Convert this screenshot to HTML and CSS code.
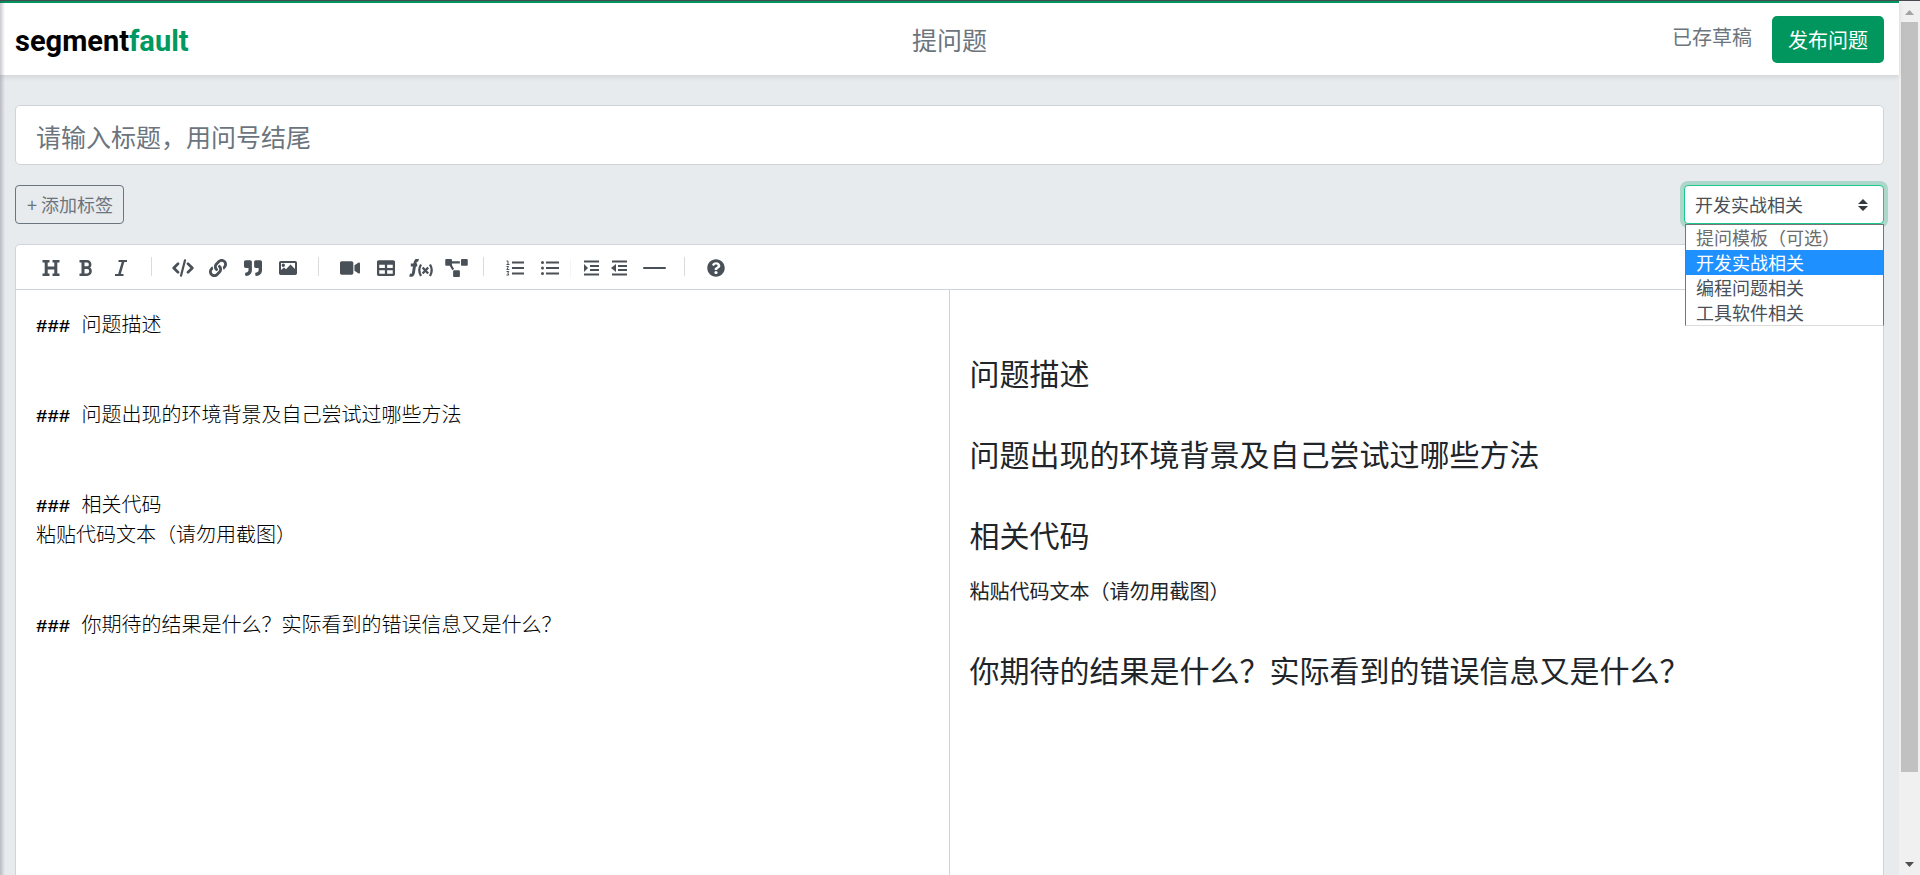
FILE: index.html
```html
<!DOCTYPE html>
<html lang="zh-CN">
<head>
<meta charset="utf-8">
<title>提问题 - SegmentFault</title>
<link rel="stylesheet" href="styles.css">
</head>
<body>
<div class="window">
  <div class="page">
    <header class="header">
      <a class="logo" href="#">segment<span class="logo-accent">fault</span></a>
      <h1 class="header-title">提问题</h1>
      <div class="header-actions">
        <span class="draft-state">已存草稿</span>
        <button class="publish" type="button">发布问题</button>
      </div>
    </header>

    <main class="main">
      <input class="title-input" type="text" aria-label="标题" placeholder="请输入标题，用问号结尾">

      <div class="meta-row">
        <button class="add-tag" type="button">+ 添加标签</button>
        <div class="template">
          <select class="template-select" aria-label="提问模板">
            <option>提问模板（可选）</option>
            <option selected>开发实战相关</option>
            <option>编程问题相关</option>
            <option>工具软件相关</option>
          </select>
          <svg class="template-arrows" viewBox="0 0 10 12" aria-hidden="true"><path d="M5 0l5 5H0zM0 7h10l-5 5z"/></svg>
          <ul class="template-menu">
            <li class="template-item muted">提问模板（可选）</li>
            <li class="template-item active">开发实战相关</li>
            <li class="template-item">编程问题相关</li>
            <li class="template-item">工具软件相关</li>
          </ul>
        </div>
      </div>

      <section class="editor">
        <div class="toolbar" role="toolbar" aria-label="编辑工具">
          <button class="tool" type="button" aria-label="标题"><svg class="icon line" width="18" height="16" viewBox="0 0 18 16"><path d="M.5 1.300h7M10.500 1.300h7M.5 14.700h7M10.500 14.700h7" stroke-width="2.500"/><path d="M4.200 1v14M13.800 1v14M4 8h10" stroke-width="3"/></svg></button>
          <button class="tool" type="button" aria-label="粗体"><svg class="icon line" width="14" height="16" viewBox="0 0 14 16"><path d="M.5 1.300H8a3.100 3.100 0 0 1 0 6.300H4M8 7.600a3.500 3.500 0 0 1 0 7.100H.5" stroke-width="2.600"/><path d="M4 1v14" stroke-width="3"/></svg></button>
          <button class="tool" type="button" aria-label="斜体"><svg class="icon line" width="12" height="16" viewBox="0 0 12 16"><path d="M3.500 1.100H12M0 14.900h8.500" stroke-width="2"/><path d="M8.300 1L4.200 15" stroke-width="2.600"/></svg></button>
          <span class="divider"></span>
          <button class="tool" type="button" aria-label="代码"><svg class="icon line round" width="22" height="18" viewBox="0 0 22 18"><path d="M6 4.800L1.700 9 6 13.200M16 4.800L20.300 9 16 13.200" stroke-width="2.700"/><path d="M13 1.300L9 16.700" stroke-width="2.200"/></svg></button>
          <button class="tool" type="button" aria-label="链接"><svg class="icon" width="18" height="18" viewBox="0 0 512 512"><path d="M326.612 185.391c59.747 59.809 58.927 155.698.36 214.59-.11.12-.24.25-.36.37l-67.2 67.2c-59.27 59.27-155.699 59.262-214.96 0-59.27-59.26-59.27-155.7 0-214.96l37.106-37.106c9.84-9.84 26.786-3.3 27.294 10.606.648 17.722 3.826 35.527 9.69 52.721 1.986 5.822.567 12.262-3.783 16.612l-13.087 13.087c-28.026 28.026-28.905 73.66-1.155 101.96 28.024 28.579 74.086 28.749 102.325.51l67.2-67.19c28.191-28.191 28.073-73.757 0-101.83-3.701-3.694-7.429-6.564-10.341-8.569a16.037 16.037 0 0 1-6.947-12.606c-.396-10.567 3.348-21.456 11.698-29.806l21.054-21.055c5.521-5.521 14.182-6.199 20.584-1.731a152.482 152.482 0 0 1 20.522 17.197zM467.547 44.449c-59.261-59.262-155.69-59.27-214.96 0l-67.2 67.2c-.12.12-.25.25-.36.37-58.566 58.892-59.387 154.781.36 214.59a152.454 152.454 0 0 0 20.521 17.196c6.402 4.468 15.064 3.789 20.584-1.731l21.054-21.055c8.35-8.35 12.094-19.239 11.698-29.806a16.037 16.037 0 0 0-6.947-12.606c-2.912-2.005-6.64-4.875-10.341-8.569-28.073-28.073-28.191-73.639 0-101.83l67.2-67.19c28.239-28.239 74.3-28.069 102.325.51 27.75 28.3 26.872 73.934-1.155 101.96l-13.087 13.087c-4.35 4.35-5.769 10.79-3.783 16.612 5.864 17.194 9.042 34.999 9.69 52.721.509 13.906 17.454 20.446 27.294 10.606l37.106-37.106c59.271-59.259 59.271-155.699.001-214.959z"/></svg></button>
          <button class="tool" type="button" aria-label="引用"><svg class="icon" width="18" height="18" viewBox="0 0 512 512"><path d="M464 32H336c-26.5 0-48 21.5-48 48v128c0 26.5 21.5 48 48 48h80v64c0 35.300-28.700 64-64 64h-8c-13.300 0-24 10.700-24 24v48c0 13.300 10.700 24 24 24h8c88.400 0 160-71.600 160-160V80c0-26.500-21.500-48-48-48zm-288 0H48C21.500 32 0 53.500 0 80v128c0 26.500 21.500 48 48 48h80v64c0 35.300-28.700 64-64 64h-8c-13.300 0-24 10.700-24 24v48c0 13.300 10.700 24 24 24h8c88.400 0 160-71.600 160-160V80c0-26.500-21.500-48-48-48z"/></svg></button>
          <button class="tool" type="button" aria-label="图片"><svg class="icon" width="18" height="14" viewBox="0 0 18 14"><path fill-rule="evenodd" d="M1.700 0h14.600A1.700 1.700 0 0 1 18 1.700v10.600a1.700 1.700 0 0 1-1.700 1.700H1.700A1.700 1.700 0 0 1 0 12.300V1.700A1.700 1.700 0 0 1 1.700 0zM2 2v7l3-2.600 2 1.800 4.500-4.700L16 8V2zM2.600 4.200a1.700 1.700 0 1 0 3.400 0 1.700 1.700 0 1 0-3.400 0z"/></svg></button>
          <span class="divider"></span>
          <button class="tool" type="button" aria-label="视频"><svg class="icon" width="20" height="18" viewBox="0 0 576 512"><path d="M336.200 64H47.800C21.400 64 0 85.400 0 111.800v288.400C0 426.600 21.400 448 47.800 448h288.400c26.400 0 47.800-21.400 47.800-47.800V111.800c0-26.400-21.400-47.800-47.800-47.800zm189.400 37.700L416 177.300v157.400l109.600 75.500c21.200 14.600 50.400-.3 50.400-25.800V127.500c0-25.400-29.100-40.400-50.400-25.800z"/></svg></button>
          <button class="tool spaced" type="button" aria-label="表格"><svg class="icon" width="18" height="18" viewBox="0 0 512 512"><path d="M464 32H48C21.490 32 0 53.490 0 80v352c0 26.510 21.490 48 48 48h416c26.510 0 48-21.490 48-48V80c0-26.510-21.490-48-48-48zM224 416H64v-96h160v96zm0-160H64v-96h160v96zm224 160H288v-96h160v96zm0-160H288v-96h160v96z"/></svg></button>
          <button class="tool" type="button" aria-label="公式"><svg class="icon line" width="24" height="18" viewBox="0 0 24 18"><path d="M9.500 1.500C7 .6 6.300 2 5.900 4.500L4.500 13.500C4.100 16 3 16.700.6 16M1.800 6h6.400" stroke-width="2.900"/><path d="M12 5.500q-3.400 5.700 0 11.500M21 5.500q3.400 5.700 0 11.500M13.600 8.500l5.600 6M19.200 8.500l-5.600 6" stroke-width="2.300"/></svg></button>
          <button class="tool spaced" type="button" aria-label="流程图"><svg class="icon" width="23" height="18" viewBox="0 0 640 512"><path d="M384 320H256c-17.670 0-32 14.330-32 32v128c0 17.670 14.330 32 32 32h128c17.670 0 32-14.330 32-32V352c0-17.670-14.330-32-32-32zM192 32c0-17.670-14.330-32-32-32H32C14.330 0 0 14.330 0 32v128c0 17.670 14.330 32 32 32h95.720l73.160 128.040C211.980 300.980 232.400 288 256 288h.28L192 175.510V128h224V64H192V32zM608 0H480c-17.670 0-32 14.330-32 32v128c0 17.670 14.330 32 32 32h128c17.670 0 32-14.330 32-32V32c0-17.670-14.330-32-32-32z"/></svg></button>
          <span class="divider after-wide"></span>
          <button class="tool" type="button" aria-label="有序列表"><svg class="icon line" width="18" height="16" viewBox="0 0 18 16"><path d="M6 2.500h12M6 8h12M6 13.500h12" stroke-width="2"/><path d="M.5 1H2v3.500M.5 4.500h3M.5 6.500h2L.8 9.500h2.500M.5 11.500h2.300l-1 1.500 1 2H.5" stroke-width="1"/></svg></button>
          <button class="tool" type="button" aria-label="无序列表"><svg class="icon line" width="18" height="16" viewBox="0 0 18 16"><path d="M5 2.500h13M5 8h13M5 13.500h13" stroke-width="2"/><path class="dot" d="M0 2.500a1.500 1.500 0 1 0 3 0 1.500 1.500 0 1 0-3 0M0 8a1.500 1.500 0 1 0 3 0 1.500 1.500 0 1 0-3 0M0 13.500a1.500 1.500 0 1 0 3 0 1.500 1.500 0 1 0-3 0"/></svg></button>
          <span class="divider faint"></span>
          <button class="tool narrow" type="button" aria-label="增加缩进"><svg class="icon line" width="16" height="16" viewBox="0 0 16 16"><path d="M1 1.500h15M7 6h9M7 10h9M1 14.500h15" stroke-width="2"/><path class="dot" d="M1 4v8l4-4z"/></svg></button>
          <button class="tool narrow" type="button" aria-label="减少缩进"><svg class="icon line" width="16" height="16" viewBox="0 0 16 16"><path d="M1 1.500h15M7 6h9M7 10h9M1 14.500h15" stroke-width="2"/><path class="dot" d="M5 4v8L0 8z"/></svg></button>
          <button class="tool wide" type="button" aria-label="分割线"><svg class="icon line round" width="23" height="4" viewBox="0 0 23 4"><path d="M1 2h21" stroke-width="2"/></svg></button>
          <span class="divider after-wide"></span>
          <button class="tool" type="button" aria-label="帮助"><svg class="icon" width="18" height="18" viewBox="0 0 512 512"><path d="M504 256c0 136.997-111.043 248-248 248S8 392.997 8 256C8 119.083 119.043 8 256 8s248 111.083 248 248zM262.655 90c-54.497 0-89.255 22.957-116.549 63.758-3.536 5.286-2.353 12.415 2.715 16.258l34.699 26.310c5.205 3.947 12.621 3.008 16.665-2.122 17.864-22.658 30.113-35.797 57.303-35.797 20.429 0 45.698 13.148 45.698 32.958 0 14.976-12.363 22.667-32.534 33.976C247.128 238.528 216 254.941 216 296v4c0 6.627 5.373 12 12 12h56c6.627 0 12-5.373 12-12v-1.333c0-28.462 83.186-29.647 83.186-106.667 0-58.002-60.165-102-116.531-102zM256 338c-25.365 0-46 20.635-46 46 0 25.364 20.635 46 46 46s46-20.636 46-46c0-25.365-20.635-46-46-46z"/></svg></button>
        </div>

        <div class="panes">
          <div class="source" role="textbox" aria-multiline="true" aria-label="问题内容" contenteditable="true" spellcheck="false"><div class="source-line"><span class="hash">### </span>问题描述</div><div class="source-line"></div><div class="source-line"></div><div class="source-line"><span class="hash">### </span>问题出现的环境背景及自己尝试过哪些方法</div><div class="source-line"></div><div class="source-line"></div><div class="source-line"><span class="hash">### </span>相关代码</div><div class="source-line">粘贴代码文本（请勿用截图）</div><div class="source-line"></div><div class="source-line"></div><div class="source-line"><span class="hash">### </span>你期待的结果是什么？实际看到的错误信息又是什么？</div></div>
          <article class="preview">
            <h3 class="preview-heading">问题描述</h3>
            <h3 class="preview-heading">问题出现的环境背景及自己尝试过哪些方法</h3>
            <h3 class="preview-heading">相关代码</h3>
            <p class="preview-text">粘贴代码文本（请勿用截图）</p>
            <h3 class="preview-heading">你期待的结果是什么？实际看到的错误信息又是什么？</h3>
          </article>
        </div>
      </section>
    </main>
  </div>

  <div class="scrollbar" aria-hidden="true">
    <svg class="scroll-arrow up" viewBox="0 0 9 5"><path d="M4.500 0L9 5H0z"/></svg>
    <div class="scroll-track"><div class="scroll-thumb"></div></div>
    <svg class="scroll-arrow" viewBox="0 0 9 5"><path d="M0 0h9L4.500 5z"/></svg>
  </div>
</div>
</body>
</html>
```

FILE: styles.css
```css
* {
  box-sizing: border-box;
}

body {
  margin: 0;
  font-family: "Noto Sans CJK SC", "Noto Sans", sans-serif;
  font-size: 20px;
  line-height: 30px;
  color: #212529;
}

button,
input,
select {
  font-family: inherit;
}

.window {
  display: flex;
  height: 100vh;
  overflow: hidden;
  border-top: 1px solid #494950;
}

.page {
  position: relative;
  flex: 1;
  min-width: 0;
  display: flex;
  flex-direction: column;
  background: #e7ebee;
}

/* soft shade along the left window edge */
.page::after {
  content: "";
  position: absolute;
  top: 0;
  bottom: 0;
  left: 0;
  width: 5px;
  background: linear-gradient(to right, rgba(70, 60, 80, 0.28), rgba(70, 60, 80, 0));
  pointer-events: none;
}

.header {
  display: grid;
  grid-template-columns: 1fr auto 1fr;
  align-items: center;
  height: 74px;
  padding: 0 15px;
  border-top: 2px solid #00965e;
  background: #fff;
  box-shadow: 0 2px 5px rgba(0, 0, 0, 0.1);
}

.logo {
  justify-self: start;
  padding-top: 3px;
  font-family: Roboto, sans-serif;
  font-size: 29px;
  font-weight: 700;
  color: #000;
  text-decoration: none;
}

.logo-accent {
  color: #009a61;
}

.header-title {
  margin: 0;
  font-size: 25px;
  font-weight: 400;
  color: #6c757d;
}

.header-actions {
  justify-self: end;
  display: flex;
  align-items: center;
  gap: 20px;
}

.draft-state {
  padding-bottom: 4px;
  color: #6c757d;
}

.publish {
  height: 47px;
  padding: 0 16px;
  border: 0;
  border-radius: 5px;
  background: #00965e;
  font-size: 20px;
  color: #fff;
}

.main {
  flex: 1;
  min-height: 0;
  display: flex;
  flex-direction: column;
  gap: 20px;
  padding: 30px 15px 0;
}

.title-input {
  flex: none;
  width: 100%;
  height: 60px;
  padding: 2px 20px 0;
  border: 1px solid #ced4da;
  border-radius: 5px;
  background: #fff;
  font-size: 25px;
}

.title-input::placeholder {
  color: #6c757d;
}

.meta-row {
  display: flex;
  justify-content: space-between;
  height: 39px;
}

.add-tag {
  padding: 0 10px 2px 11px;
  border: 1px solid #6c757d;
  border-radius: 4px;
  background: transparent;
  font-size: 18px;
  color: #6c757d;
}

.template {
  position: relative;
  width: 200px;
}

.template-select {
  appearance: none;
  display: block;
  width: 100%;
  height: 100%;
  padding: 0 10px 2px;
  border: 1px solid #1cc88a;
  border-radius: 4px;
  outline: 0;
  background: #fff;
  box-shadow: 0 0 0 4px rgba(0, 154, 97, 0.25);
  font-size: 18px;
  color: #495057;
}

.template-arrows {
  position: absolute;
  top: 14px;
  right: 16px;
  width: 10px;
  height: 12px;
  fill: #343a40;
  pointer-events: none;
}

.template-menu {
  position: absolute;
  z-index: 2;
  top: 100%;
  left: 1px;
  right: 0;
  margin: 0;
  padding: 0;
  border: 1px solid #767676;
  border-bottom-color: #dcdcdc;
  background: #fff;
  list-style: none;
}

.template-item {
  padding-left: 10px;
  font-size: 18px;
  line-height: 25px;
  color: #495057;
}

.template-item.muted {
  color: #6d6d6d;
}

.template-item.active {
  background: #1e90ff;
  color: #fff;
}

.editor {
  flex: 1;
  min-height: 0;
  display: flex;
  flex-direction: column;
  border: 1px solid #ced4da;
  border-bottom: 0;
  border-radius: 5px 5px 0 0;
  background: #fff;
}

.toolbar {
  display: flex;
  align-items: center;
  height: 45px;
  padding: 2px 17px 0;
  border-bottom: 1px solid #ced4da;
}

.tool {
  display: flex;
  align-items: center;
  justify-content: center;
  width: 35px;
  height: 35px;
  padding: 0;
  border: 0;
  background: transparent;
}

.tool.narrow {
  width: 28px;
}

.tool.wide {
  width: 42px;
}

.tool.spaced {
  margin-left: 1px;
}

.icon {
  fill: #495057;
}

.icon.line {
  fill: none;
  stroke: #495057;
}

.icon.round {
  stroke-linecap: round;
  stroke-linejoin: round;
}

.icon .dot {
  fill: #495057;
  stroke: none;
}

.divider {
  width: 1px;
  height: 19px;
  margin: 0 13px 4px;
  background: #d9dcdf;
}

.divider.after-wide {
  margin-left: 9px;
}

.divider.faint {
  margin: 0 6px 0 3px;
  background: #f4f5f6;
}

.panes {
  flex: 1;
  min-height: 0;
  display: grid;
  grid-template-columns: 1fr 1fr;
}

.source {
  padding: 19px 20px;
  border-right: 1px solid #ced4da;
  outline: 0;
  font-weight: 300;
  color: #000;
}

.source-line {
  height: 30px;
}

.hash {
  font-family: "Liberation Mono", monospace;
  font-size: 19px;
  font-weight: 700;
  white-space: pre;
}

.preview {
  padding: 19px 20px;
  overflow: hidden;
}

.preview-heading {
  margin: 45px 0 24px;
  font-size: 30px;
  font-weight: 400;
  line-height: 36px;
}

.preview-text {
  margin: 0;
}

.scrollbar {
  display: flex;
  flex-direction: column;
  align-items: center;
  width: 21px;
  padding: 9px 0 8px;
  background: #f0f0f0;
}

.scroll-arrow {
  width: 9px;
  height: 5px;
  fill: #505050;
}

.scroll-arrow.up {
  fill: #a3a3a3;
}

.scroll-track {
  flex: 1;
  align-self: stretch;
  margin: 7px 2px;
}

.scroll-thumb {
  height: 90%;
  background: #c1c1c1;
}
```
